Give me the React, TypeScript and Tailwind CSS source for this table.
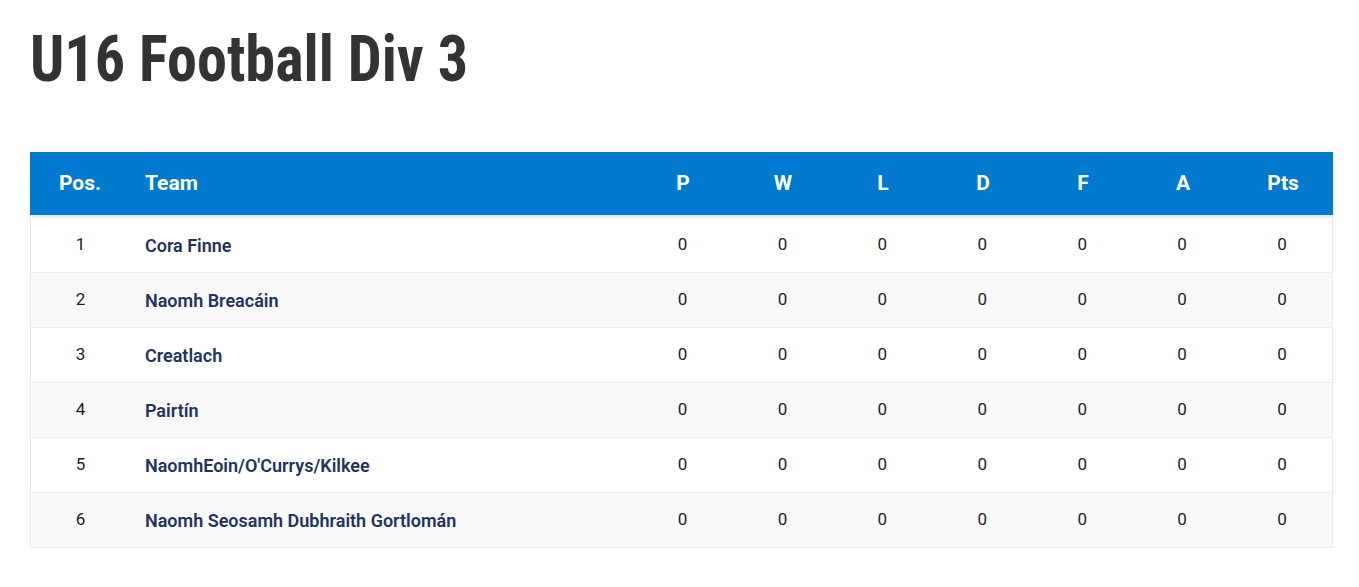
import React from "react";

const teams = [
  "Cora Finne",
  "Naomh Breacáin",
  "Creatlach",
  "Pairtín",
  "NaomhEoin/O'Currys/Kilkee",
  "Naomh Seosamh Dubhraith Gortlomán",
];

const stats = ["P", "W", "L", "D", "F", "A", "Pts"];

export default function App() {
  return (
    <div className="bg-white min-h-[587px] w-[1359px] pt-[22px] px-[30px] font-['Roboto',sans-serif]">
      <h1
        className="inline-block origin-left scale-x-[0.94] text-[64px] leading-[76px] font-bold text-[#333333]"
        style={{ fontStretch: "condensed" }}
      >
        U16 Football Div 3
      </h1>
      <div className="mt-[54px] w-[1303px]">
        <div className="flex h-[63px] items-center bg-[#0079cf] text-white text-[21px] font-bold border-b-[3px] border-[#e3f1fb] box-content">
          <div className="w-[100px] text-center">Pos.</div>
          <div className="w-[503px] pl-[15px]">Team</div>
          {stats.map((s) => (
            <div key={s} className="w-[100px] text-center">
              {s}
            </div>
          ))}
        </div>
        {teams.map((t, i) => (
          <div
            key={t}
            className={`flex h-[55px] items-center border-x border-b border-[#ebebeb] text-[17px] text-[#222222] ${
              i % 2 === 1 ? "bg-[#f9f9f9]" : "bg-white"
            }`}
          >
            <div className="w-[99px] text-center">{i + 1}</div>
            <div className="w-[503px] pl-[15px] text-[18px] font-semibold text-[#22345c]">{t}</div>
            {stats.map((s) => (
              <div key={s} className="w-[100px] text-center">
                0
              </div>
            ))}
          </div>
        ))}
      </div>
    </div>
  );
}
